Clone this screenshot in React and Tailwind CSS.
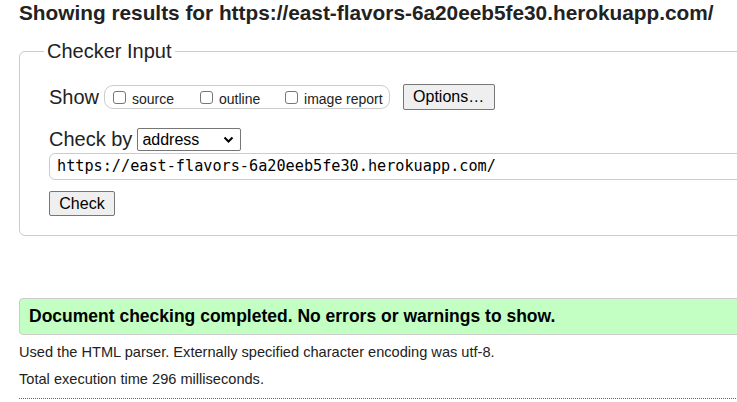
import React from "react";

const Box = ({ label }) => (
  <label className="flex items-center gap-[6px] text-[14px] text-[#222]">
    <span className="inline-block w-[13px] h-[13px] rounded-[3px] border border-[#767676] bg-white" />
    <span className="leading-[16px] mt-[3px]">{label}</span>
  </label>
);

const App = () => {
  return (
    <div className="w-[737px] h-[402px] overflow-hidden bg-white text-[#222] font-['Liberation_Sans',Arial,sans-serif]">
      <div className="w-[800px] pl-[19px]">
        <h2 className="pt-[1px] text-[20.8px] leading-[24px] font-bold text-[#222]">
          Showing results for https://east-flavors-6a20eeb5fe30.herokuapp.com/
        </h2>

        <fieldset className="mt-[15px] border border-[#ccc] rounded-[6px] pl-[29px] pr-4 pt-[21px] pb-[19px]">
          <legend className="ml-[-5px] px-[3px] text-[20px] leading-[23px]">Checker Input</legend>

          <div className="flex items-center">
            <span className="text-[20px] leading-[23px] mr-[5px]">Show</span>
            <div className="flex items-center h-[24px] border border-[#ccc] rounded-[9px] pl-[8px] pr-[6px]">
              <div className="w-[87px]"><Box label="source" /></div>
              <div className="w-[85px]"><Box label="outline" /></div>
              <Box label="image report" />
            </div>
            <button className="ml-[13px] h-[26px] w-[92px] border border-[#767676] rounded-[2px] bg-[#efefef] text-[16px] text-black">
              Options…
            </button>
          </div>

          <div className="flex items-center mt-[18px]">
            <span className="text-[20px] leading-[23px] mr-[5px]">Check by</span>
            <div className="flex items-center justify-between h-[23px] w-[104px] border border-[#767676] rounded-[2px] pl-[4px] pr-[6px] text-[16px] text-black">
              <span>address</span>
              <svg width="11" height="8" viewBox="0 0 11 8">
                <path d="M1.5 1.5 L5.5 5.5 L9.5 1.5" fill="none" stroke="#000" strokeWidth="2" />
              </svg>
            </div>
          </div>

          <div className="mt-[2px] h-[27px] w-[760px] border border-[#ccc] rounded-[6px] pl-[7px] flex items-center font-['DejaVu_Sans_Mono',monospace] text-[15.2px] text-black">
            https://east-flavors-6a20eeb5fe30.herokuapp.com/
          </div>

          <button className="mt-[11px] h-[25px] w-[66px] border border-[#767676] rounded-[2px] bg-[#efefef] text-[16px] text-black">
            Check
          </button>
        </fieldset>

        <div className="mt-[62px] h-[37px] border border-[#ccc] rounded-[4px] bg-[#c3ffc3] pl-[9px] flex items-center">
          <span className="text-[17.5px] font-bold text-black">
            Document checking completed. No errors or warnings to show.
          </span>
        </div>

        <p className="mt-[8px] text-[14.6px] leading-[18px]">
          Used the HTML parser. Externally specified character encoding was utf-8.
        </p>
        <p className="mt-[9px] text-[14.6px] leading-[18px]">Total execution time 296 milliseconds.</p>
        <div className="mt-[10px] border-t border-dotted border-[#666]" />
      </div>
    </div>
  );
};

export default App;
